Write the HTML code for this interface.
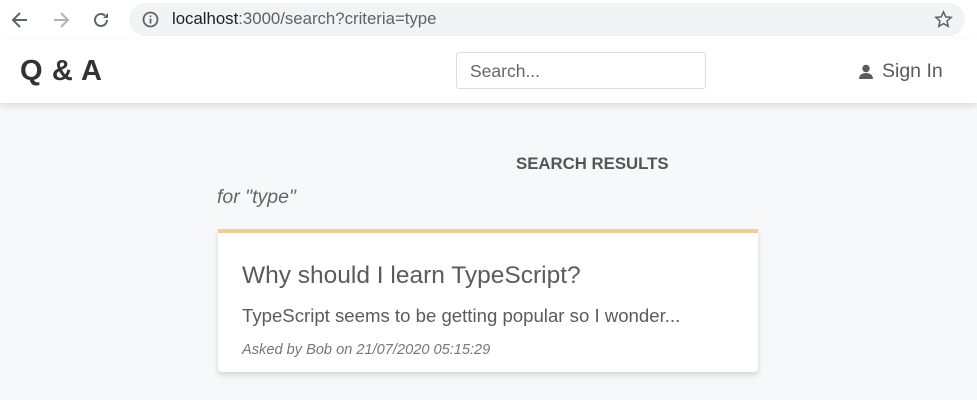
<!DOCTYPE html>
<html><head><meta charset="utf-8"><style>
*{margin:0;padding:0;box-sizing:border-box}
body{width:977px;height:400px;overflow:hidden;background:#f7f8fa;font-family:"Liberation Sans",sans-serif;color:#5c5a5a;position:relative}
.chrome{position:absolute;left:0;top:0;width:977px;height:39px;background:#fff}
.url{position:absolute;left:129px;top:3px;width:836px;height:33px;background:#f1f3f4;border-radius:17px}
.url span{position:absolute;left:43px;top:6px;font-size:16.8px;color:#202124}
.url span i{font-style:normal;color:#5f6368}
.hdr{position:absolute;left:0;top:39px;width:977px;height:64px;background:#fff;box-shadow:0 3px 7px rgba(0,0,0,.12)}
.logo{position:absolute;left:20px;top:16px;font-size:29px;font-weight:bold;color:#333;letter-spacing:0.6px}
.search{position:absolute;left:456px;top:13px;width:250px;height:37px;border:1px solid #ddd;border-radius:3px;font-size:17.5px;color:#666;padding:8px 13px}
.sign{position:absolute;top:21px;font-size:19.5px;color:#5c5a5a}
.res{position:absolute;left:516px;top:154px;font-size:16.8px;font-weight:bold;color:#555}
.for{position:absolute;left:217px;top:186px;font-size:19.5px;font-style:italic;color:#666}
.card{position:absolute;left:218px;top:229px;width:540px;height:143px;background:#fff;border-top:4px solid #efcf8f;border-radius:0 0 4px 4px;box-shadow:0 3px 6px rgba(0,0,0,.15)}
.t{position:absolute;left:24px;top:29px;font-size:24.5px;color:#5c5a5a}
.b{position:absolute;left:24px;top:72px;font-size:18.6px;color:#5c5a5a}
.m{position:absolute;left:24px;top:109px;font-size:14.6px;font-style:italic;color:#777}
</style></head><body>
<div class="chrome">
<svg style="position:absolute;left:10px;top:10px" width="20" height="20" viewBox="0 0 20 20"><path d="M17 10H4M10 3L3 10l7 7" stroke="#5f6368" stroke-width="2" fill="none"/></svg>
<svg style="position:absolute;left:51px;top:10px" width="20" height="20" viewBox="0 0 20 20"><path d="M3 10h13M10 3l7 7-7 7" stroke="#b0b3b6" stroke-width="2" fill="none"/></svg>
<svg style="position:absolute;left:91px;top:10px" width="20" height="20" viewBox="0 0 20 20"><path d="M16 10a6 6 0 1 1-2-4.5" stroke="#5f6368" stroke-width="2" fill="none"/><path d="M17 3v5h-5z" fill="#5f6368"/></svg>
<div class="url">
<svg style="position:absolute;left:13px;top:8px" width="17" height="17" viewBox="0 0 17 17"><circle cx="8.5" cy="8.5" r="7" stroke="#5f6368" stroke-width="1.8" fill="none"/><path d="M8.5 7.5v5M8.5 4.5v1.5" stroke="#5f6368" stroke-width="1.8"/></svg>
<span>localhost<i>:3000/search?criteria=type</i></span>
<svg style="position:absolute;left:805px;top:7px" width="19" height="19" viewBox="0 0 20 20"><path d="M10 2l2.4 5.3 5.6.5-4.3 3.8 1.3 5.6L10 14.3 5 17.2l1.3-5.6L2 7.8l5.6-.5z" stroke="#5f6368" stroke-width="1.6" fill="none"/></svg>
</div></div>
<div class="hdr">
<div class="logo">Q &amp; A</div>
<div class="search">Search...</div>
<svg style="position:absolute;left:858px;top:25px" width="16" height="16" viewBox="0 0 16 16"><circle cx="8" cy="4.5" r="3.7" fill="#5c5a5a"/><path d="M1 15c0-4 3-6 7-6s7 2 7 6z" fill="#5c5a5a"/></svg>
<div class="sign" style="left:882px">Sign In</div>
</div>
<div class="res">SEARCH RESULTS</div>
<div class="for">for "type"</div>
<div class="card">
<div class="t">Why should I learn TypeScript?</div>
<div class="b">TypeScript seems to be getting popular so I wonder...</div>
<div class="m">Asked by Bob on 21/07/2020 05:15:29</div>
</div>
</body></html>
